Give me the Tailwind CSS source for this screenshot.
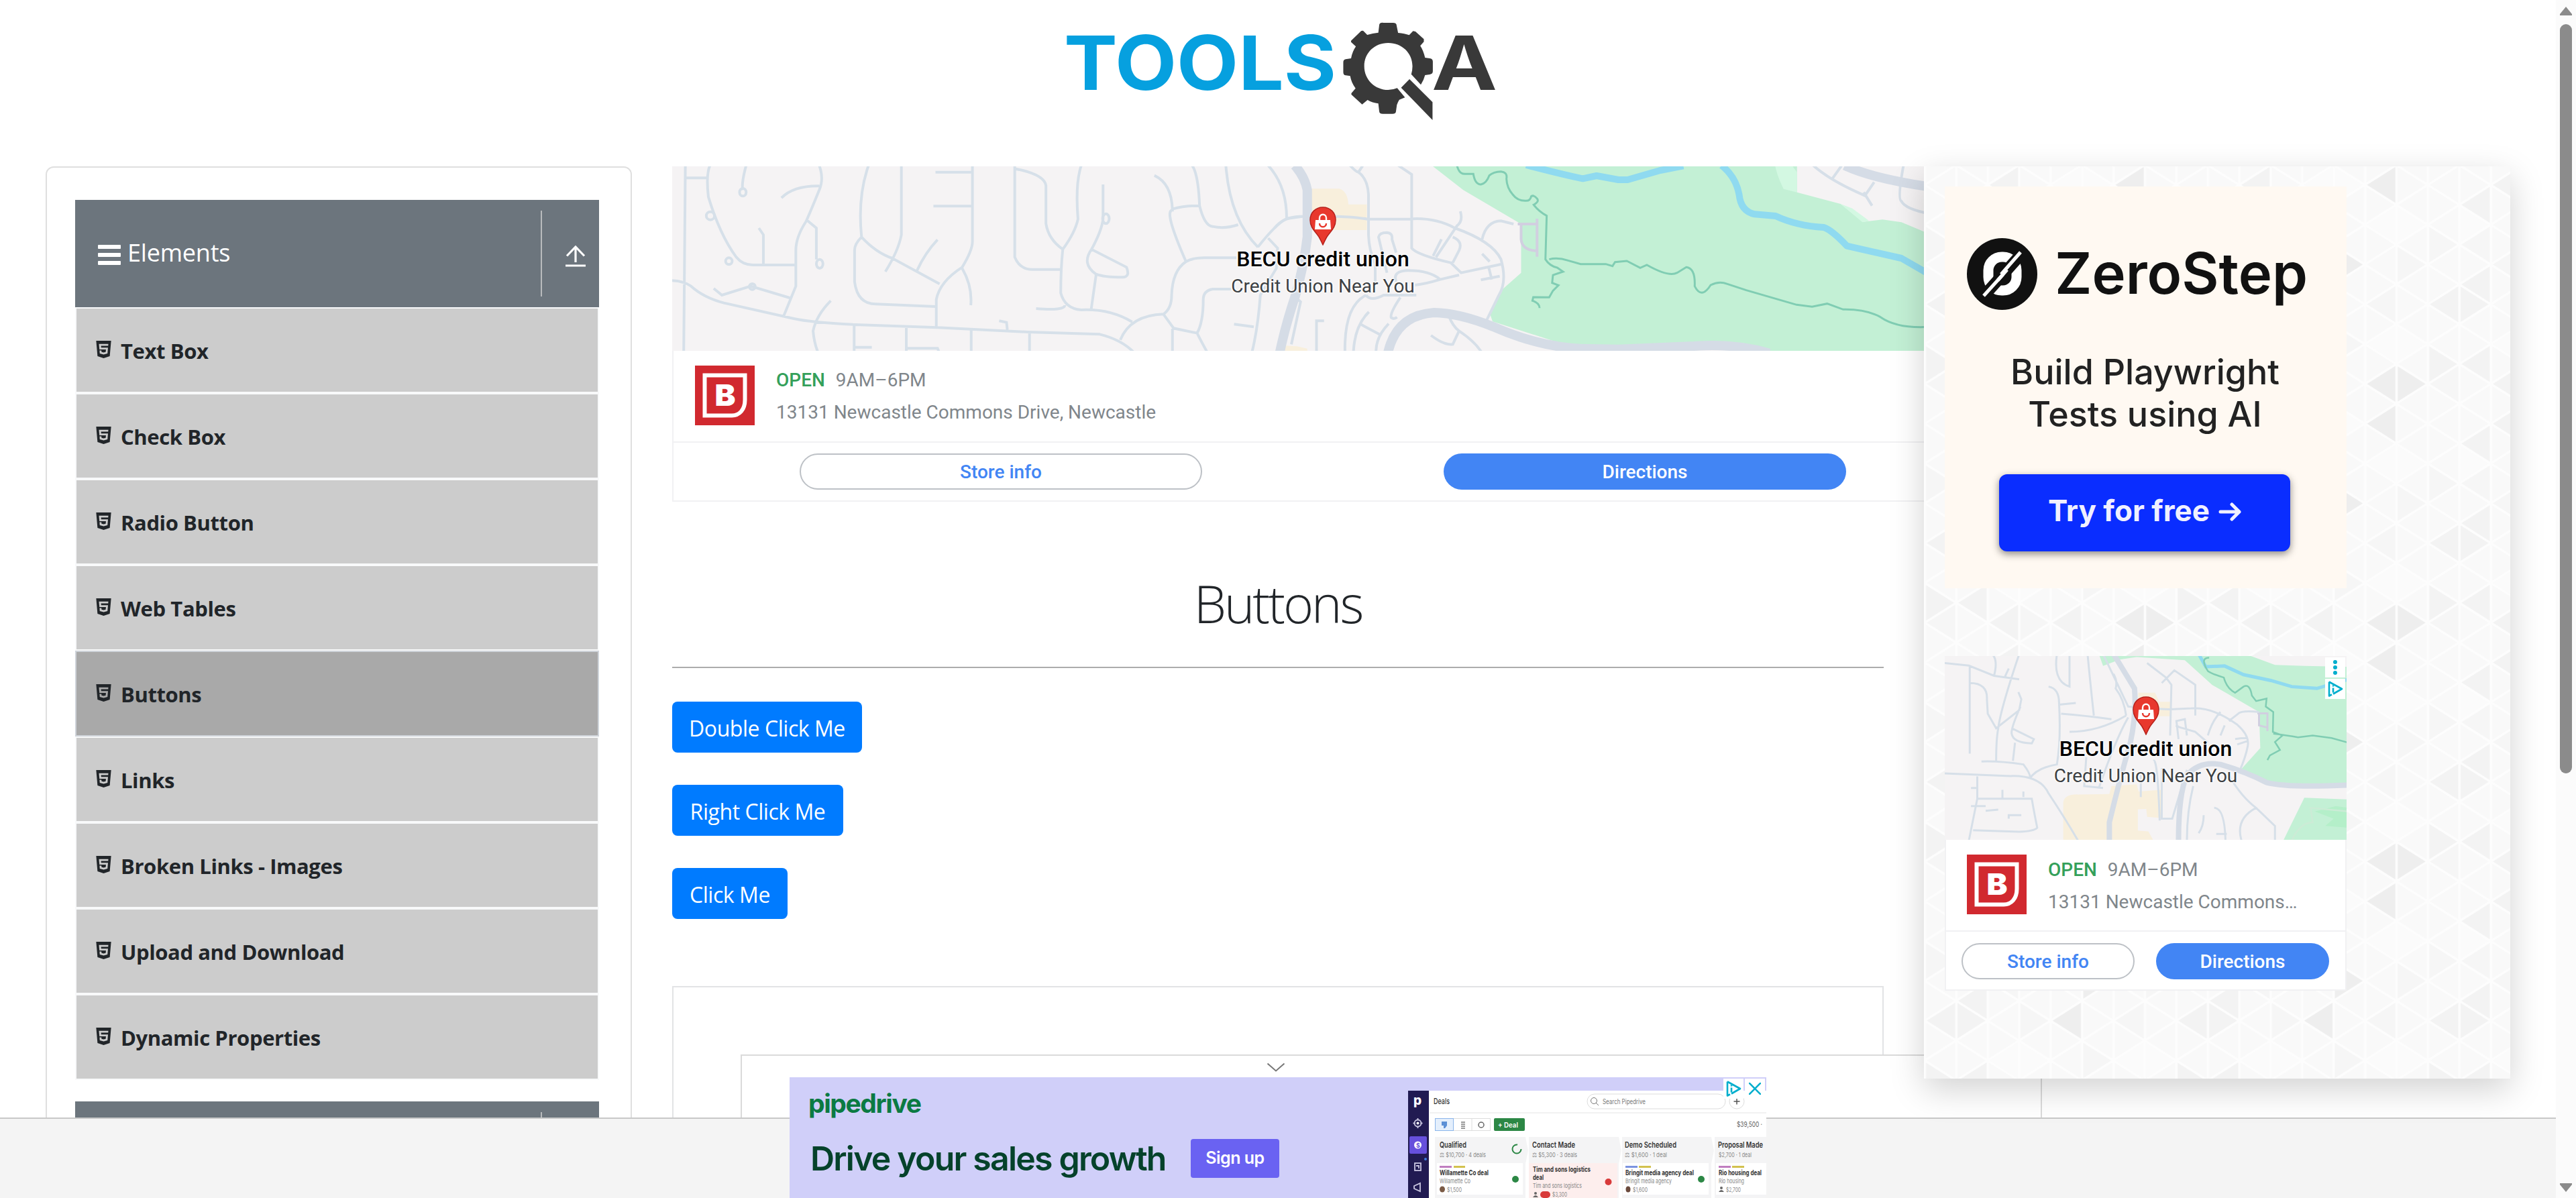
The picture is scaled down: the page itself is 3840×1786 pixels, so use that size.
<!DOCTYPE html>
<html lang="en">
<head>
<meta charset="utf-8">
<title>ToolsQA - Buttons</title>
<script src="https://cdn.jsdelivr.net/npm/@tailwindcss/browser@4"></script>
</head>
<body class="relative h-[1786px] w-[3840px] overflow-hidden bg-white font-['Open_Sans','Noto_Sans',sans-serif] text-[#212529]">

<!-- shared symbols -->
<svg class="hidden">
  <symbol id="html5" viewBox="0 32 384 448"><path d="M0 32l34.9 395.8L191.5 480l157.6-52.2L384 32H0zm308.2 127.9H124.4l4.1 49.4h175.6l-13.6 148.4-97.9 27v.3h-1.1l-98.7-27.3-6-75.8h47.7L138 320l53.5 14.500 53.7-14.500 6-62.2H84.3L71.5 112.2h241.1l-4.4 47.7z"/></symbol>
  <symbol id="pin" viewBox="0 0 40 58"><path d="M20 1C9 1 1 9 1 20c0 12 8 17 13 25 3 5 4 8 6 12 2-4 3-7 6-12 5-8 13-13 13-25C39 9 31 1 20 1z" fill="#e8382d" stroke="#b5211b" stroke-width="1.5"/><path d="M9 20h22l1 14H8z" fill="#fff"/><path d="M15 21v-4c0-7 10-7 10 0v4" fill="none" stroke="#fff" stroke-width="2.4"/><path d="M15 25c0 7 10 7 10 0" fill="none" stroke="#e8382d" stroke-width="2.4"/></symbol>
  <symbol id="becu" viewBox="0 0 89 89"><rect width="89" height="89" fill="#d1292f"/><path d="M14.500 14.500H74.500V51C74.500 66 66 74.500 55 74.500H14.500z" fill="none" stroke="#fff" stroke-width="6"/><text x="29.500" y="60" font-family="Inter, sans-serif" font-weight="900" font-size="44" fill="#fff" textLength="31" lengthAdjust="spacingAndGlyphs">B</text></symbol>
  <symbol id="adchoice" viewBox="0 0 24 26"><path d="M3 2.500v21l4-2.200M3 2.500L22 13 9 20.500" fill="none" stroke="#00aecd" stroke-width="2.600" stroke-linejoin="round"/><path d="M9 11.500v7M9 7.500v2" stroke="#00aecd" stroke-width="2.600"/></symbol>
</svg>

<header class="h-[248px] w-full">
  <svg class="ml-[1560px] h-[220px] w-[700px]" viewBox="0 0 700 220">
    <text x="26" y="134" font-family="Inter, sans-serif" font-weight="700" font-size="112" fill="#06a0df" textLength="406" lengthAdjust="spacingAndGlyphs">TOOLS</text>
    <text x="574" y="134" font-family="Inter, sans-serif" font-weight="700" font-size="112" fill="#393939" textLength="98" lengthAdjust="spacingAndGlyphs">A</text>
    <g transform="scale(.44643 .33333)">
      <path fill="#393939" fill-rule="evenodd" d="M1125 102h32q12 0 12 12l5 33q22 2 37 10l13-18 8 2 28 34v12l-12 18q10 20 16 53l16 3q10 2 10 14v44q0 12-10 14l-16 3q-4 22-14 43l-32-47q4-18 4-36c0-60-36-104-81-104s-80 44-80 104 36 106 80 106q16 0 30-8l26 42-19 10q-5 10-8 23l-3 28q0 12-12 12h-32q-12 0-12-12l-3-34q-20-3-36-16l-18 20-36-44v-6l14-22q-14-24-18-55l-15-3q-8-2-8-14v-44q0-12 8-14l18-4q4-30 16-53l-16-20v-6l34-44 6-1 14 19q18-7 37-10l3-33q0-12 11-12z"/>
      <path fill="#393939" d="M1212 354l77 103v80L1184 392z"/>
    </g>
  </svg>
</header>

<main class="flex gap-[60px] pl-[68px]">

  <!-- sidebar -->
  <aside class="h-[1600px] w-[874px] shrink-0 rounded-[12px] border-2 border-[#dfdfdf] px-[42px] pt-[48px]">
    <div class="flex h-[160px] w-[781px] items-center bg-[#6c757d] pl-[34px] text-white">
      <svg class="mt-[4px] h-[30px] w-[34px]" viewBox="0 0 34 30" fill="#fff"><rect width="34" height="6" rx="1"/><rect y="12" width="34" height="6" rx="1"/><rect y="24" width="34" height="6" rx="1"/></svg>
      <span class="mt-[-2px] ml-[10px] text-[36px] leading-[50px] tracking-[-0.2px] whitespace-nowrap">Elements</span>
      <div class="ml-auto h-[128px] w-[2px] bg-[#b9bbbd]"></div>
      <svg class="mt-[8px] mr-[20px] ml-[35px] h-[32px] w-[30px]" viewBox="0 0 30 32" fill="none" stroke="#fff" stroke-width="3.200"><path d="M15 25V3M2 15.500L15 2l13 13.500M0 30h30"/></svg>
    </div>
    <ul class="w-[781px] text-[31px] leading-[48px] font-bold tracking-[-0.4px]">
      <li class="flex h-[128px] items-center border-2 border-[#f8f9fa] bg-[#ccc] pt-[2px] pl-[29px]"><svg class="mb-[5px] mr-[14px] h-[26px] w-[23px] fill-[#212529]"><use href="#html5"/></svg>Text Box</li>
      <li class="flex h-[128px] items-center border-2 border-[#f8f9fa] bg-[#ccc] pt-[2px] pl-[29px]"><svg class="mb-[5px] mr-[14px] h-[26px] w-[23px] fill-[#212529]"><use href="#html5"/></svg>Check Box</li>
      <li class="flex h-[128px] items-center border-2 border-[#f8f9fa] bg-[#ccc] pt-[2px] pl-[29px]"><svg class="mb-[5px] mr-[14px] h-[26px] w-[23px] fill-[#212529]"><use href="#html5"/></svg>Radio Button</li>
      <li class="flex h-[128px] items-center border-2 border-[#f8f9fa] bg-[#ccc] pt-[2px] pl-[29px]"><svg class="mb-[5px] mr-[14px] h-[26px] w-[23px] fill-[#212529]"><use href="#html5"/></svg>Web Tables</li>
      <li class="flex h-[128px] items-center border-2 border-[#cfd4da] bg-[#a9a9a9] pt-[2px] pl-[29px]"><svg class="mb-[5px] mr-[14px] h-[26px] w-[23px] fill-[#212529]"><use href="#html5"/></svg>Buttons</li>
      <li class="flex h-[128px] items-center border-2 border-[#f8f9fa] bg-[#ccc] pt-[2px] pl-[29px]"><svg class="mb-[5px] mr-[14px] h-[26px] w-[23px] fill-[#212529]"><use href="#html5"/></svg>Links</li>
      <li class="flex h-[128px] items-center border-2 border-[#f8f9fa] bg-[#ccc] pt-[2px] pl-[29px]"><svg class="mb-[5px] mr-[14px] h-[26px] w-[23px] fill-[#212529]"><use href="#html5"/></svg>Broken Links - Images</li>
      <li class="flex h-[128px] items-center border-2 border-[#f8f9fa] bg-[#ccc] pt-[2px] pl-[29px]"><svg class="mb-[5px] mr-[14px] h-[26px] w-[23px] fill-[#212529]"><use href="#html5"/></svg>Upload and Download</li>
      <li class="flex h-[128px] items-center border-2 border-[#f8f9fa] bg-[#ccc] pt-[2px] pl-[29px]"><svg class="mb-[5px] mr-[14px] h-[26px] w-[23px] fill-[#212529]"><use href="#html5"/></svg>Dynamic Properties</li>
    </ul>
    <div class="mt-[32px] flex h-[160px] w-[781px] items-center bg-[#6c757d]"><div class="ml-[694px] h-[128px] w-[2px] bg-[#b9bbbd]"></div></div>
  </aside>

  <!-- page content -->
  <section class="w-[1806px] shrink-0">
    <div class="h-[500px] w-[1940px] border-x-2 border-b-2 border-[#f1f1f3] font-[Roboto,sans-serif]">
      <div class="relative -ml-[2px] h-[275px] w-[1940px]">
        <svg class="h-[275px] w-[1940px]" viewBox="0 0 1940 275">
          <rect width="1940" height="275" fill="#f5f3f4"/>
          <g transform="translate(898 -8) scale(.625 .33333)">
            <path fill="#f8efdc" d="M88 124h66q20 10 22 70h44v115H88zM24 826l30 3 24 10v20H15z"/>
            <path fill="#c3f0d5" d="M375 20H1246V140L1350 192 1403 272 1450 262 1495 274 1560 325V860H1190L1110 815 700 826 520 718 513 680 540 580 588 500V282L450 130z"/>
            <path fill="#d3f8e2" d="M1194 20h40l12 30v90l-32-15q-16-60-20-105zM1350 192l28 20 40 56-16 6z"/>
            <g fill="none" stroke="#8fdaf0" stroke-width="10" stroke-linejoin="round">
              <path vector-effect="non-scaling-stroke" d="M600 18Q690 62 735 79L768 66 820 84H842L920 42 975 22M1066 20Q1100 70 1108 150 1112 225 1145 238L1195 246Q1245 290 1310 297 1330 310 1365 380L1495 435 1560 505"/>
            </g>
            <g fill="none" stroke="#80cdb3" stroke-width="3">
              <path vector-effect="non-scaling-stroke" d="M435 20Q440 60 455 58H474Q478 105 492 105 505 100 512 65 522 48 540 47 556 50 553 80 554 120 568 150 580 180 600 178 610 178 612 158 618 150 626 168 632 182 618 196 630 225 649 245L646 440Q656 470 674 477L688 495 664 510 662 545 677 556 664 580 655 610 617 609 615 625Q632 635 632 658M655 440Q675 430 700 445L730 461H790L806 470 812 452 840 447 872 478 888 465Q940 520 960 500L982 475Q1004 480 1002 560 1018 620 1040 555 1060 535 1080 550L1125 578 1245 643 1282 652 1318 638 1356 664Q1410 662 1445 698 1485 750 1560 742"/>
            </g>
            <g fill="none" stroke="#d1cfe0" stroke-width="4"><path vector-effect="non-scaling-stroke" d="M580 282H626M626 258V428M588 282V350Q590 400 626 402"/></g>
            <g fill="none" stroke="#d6dfe8" stroke-width="4">
              <path vector-effect="non-scaling-stroke" d="M180 20Q195 50 200 50L210 22M200 50Q222 80 224 150V330Q225 400 240 460V540M295 20L327 60V390Q340 420 420 455L445 500 540 462M0 300Q20 250 60 248H150Q190 250 222 260H320Q380 250 430 300 520 360 540 440 555 540 535 600L505 715M495 350Q505 270 540 268L570 282M443 225Q450 270 435 290L385 430M398 350L378 425M425 340Q450 360 440 400L425 455M268 500L248 340Q250 320 268 320 282 322 280 350L290 410M290 540Q280 490 320 490 370 490 395 530 360 550 335 555M395 530L440 510M495 415L513 450M510 470L518 530M492 532L537 515M218 600Q165 650 168 860M218 600Q230 630 260 600H338M300 610Q275 680 278 700 285 710 292 698M225 675Q190 740 188 860M205 730L255 780M272 728Q240 790 242 860M415 690Q425 740 440 760L425 820Q405 825 373 780M440 760Q480 810 495 860M118 715H100V860M50 610L62 630 40 820M1285 20Q1320 80 1390 140L1408 155 1430 95M1352 22L1330 80M1405 140L1425 200M1500 20Q1485 170 1495 180 1505 215 1560 235"/>
            </g>
            <path vector-effect="non-scaling-stroke" fill="none" stroke="#d5dce6" stroke-width="14" d="M48 20Q72 70 78 130V340Q70 470 50 600 25 740 12 860M270 860Q290 690 380 678 440 680 520 740 640 840 750 840L820 842 1000 828Q1100 815 1180 860M1360 20Q1420 75 1560 115"/>
          </g>
          <g transform="translate(-2.400 -8) scale(.61224 .33333)" fill="none" stroke="#d6e0e9" stroke-width="4">
            <path vector-effect="non-scaling-stroke" d="M36 20L32 860M36 76H90M96 20Q86 60 92 160 120 330 160 430 175 465 200 465H305M184 20Q172 100 176 130M270 165Q300 110 362 112M362 20Q374 80 362 130 340 230 330 270 305 340 305 400V560L275 695M330 262L355 300V440M215 300L226 330V465M0 535Q30 535 50 560 80 610 130 635L300 705Q340 722 450 732L650 745 870 765 1045 775Q1100 800 1130 860M105 570L125 600 195 560 290 612M390 625Q355 690 347 760 350 820 360 860M447 732V860M450 833H490M574 740V860M574 838H650L655 860M732 756V860M874 768V860M647 745V620Q655 540 710 475 735 400 735 360V20M645 50H735M640 202H735M482 20Q455 160 465 340 500 410 540 435L655 550M465 340Q448 370 448 400V540Q455 640 500 640L645 651M562 20V330Q555 400 523 495M650 352Q620 410 600 490M710 480Q735 560 731 645M838 20V430Q850 485 880 485H950M840 35Q910 60 914 110V280Q920 350 955 395M1000 20Q985 100 992 260 985 320 955 395 950 480 950 590 960 660 1000 666 1070 660 1124 720M1053 105V260Q1050 310 1025 395L1110 475Q1120 520 1100 520 1055 520 1035 505 1000 460 1025 395M1036 510L1024 665M890 660Q960 670 960 645M800 715L818 722 820 755M1095 800Q1120 690 1200 685 1220 660 1220 600 1222 490 1255 450 1200 220 1222 220 1220 100 1178 65M1222 215Q1250 200 1288 200M1270 20Q1285 60 1288 200 1300 290 1320 293 1350 305 1382 285M1352 20Q1362 260 1430 385M1455 20Q1500 110 1500 255M1255 450Q1270 433 1300 433H1378M1430 385Q1475 280 1500 258L1538 248M1455 345L1478 390 1475 480 1436 600Q1430 750 1415 860M1365 573H1320Q1297 580 1297 620 1297 720 1282 770 1290 800 1308 860M1200 685L1225 748 1282 770M1222 750V860M1372 730L1420 742"/>
            <g><ellipse vector-effect="non-scaling-stroke" cx="176" cy="140" rx="8" ry="17"/><ellipse vector-effect="non-scaling-stroke" cx="363" cy="460" rx="8" ry="20"/><ellipse vector-effect="non-scaling-stroke" cx="142" cy="448" rx="8" ry="15"/><ellipse vector-effect="non-scaling-stroke" cx="97" cy="245" rx="10" ry="18"/><ellipse vector-effect="non-scaling-stroke" cx="199" cy="562" rx="7" ry="13"/><ellipse vector-effect="non-scaling-stroke" cx="1060" cy="258" rx="8" ry="22"/></g>
          </g>
        </svg>
        <div class="absolute inset-x-0 top-[60px] flex flex-col items-center text-[#3c4043] [text-shadow:0_0_3px_#fff,0_0_3px_#fff,0_0_3px_#fff,0_0_3px_#fff,0_0_3px_#fff]">
          <svg class="h-[58px] w-[40px]"><use href="#pin"/></svg>
          <div class="text-[32px] leading-[40px] font-medium whitespace-nowrap text-black">BECU credit union</div>
          <div class="text-[28px] leading-[42px] whitespace-nowrap">Credit Union Near You</div>
        </div>
      </div>
      <div class="flex h-[137px] border-b-2 border-[#f1f1f3] pt-[22px] pl-[32px]">
        <svg class="h-[89px] w-[89px]"><use href="#becu"/></svg>
        <div class="-mt-[2px] ml-[32px] text-[28px] leading-[48px] whitespace-nowrap text-[#80868b]">
          <div class="flex gap-[16px]"><span class="font-medium text-[#34a05a]">OPEN</span><span>9AM–6PM</span></div>
          <div>13131 Newcastle Commons Drive, Newcastle</div>
        </div>
      </div>
      <div class="flex gap-[360px] px-[188px] pt-[16px] text-[28px] font-medium">
        <div class="flex h-[54px] w-[600px] items-center justify-center rounded-full border-2 border-[#bdc1c6] pt-[2px] text-[#4285f4]">Store info</div>
        <div class="flex h-[54px] w-[600px] items-center justify-center rounded-full bg-[#4285f4] pt-[2px] text-white">Directions</div>
      </div>
    </div>

    <h1 class="mt-[96px] flex h-[112px] items-center justify-center text-[77px] leading-[112px] font-light tracking-[-3px]">Buttons</h1>
    <hr class="mt-[38px] border-0 border-t-2 border-[#acacac]">
    <div class="mt-[50px] flex flex-col items-start gap-[48px] text-[32px] leading-[48px] tracking-[-0.45px] text-white">
      <button class="h-[76px] w-[283px] rounded-[8px] bg-[#007bff] pt-[3px] whitespace-nowrap">Double Click Me</button>
      <button class="h-[76px] w-[255px] rounded-[8px] bg-[#007bff] pt-[3px] whitespace-nowrap">Right Click Me</button>
      <button class="h-[76px] w-[172px] rounded-[8px] bg-[#007bff] pt-[3px] whitespace-nowrap">Click Me</button>
    </div>
    <div class="mt-[100px] h-[400px] w-full border-2 border-[#e2e3e5]"></div>
  </section>

  <!-- right-hand adverts -->
  <aside class="relative z-20 h-[1360px] w-[874px] shrink-0 shadow-[0_16px_48px_rgba(0,0,0,0.18)]">
    <svg class="absolute inset-0 h-[1360px] w-[874px]">
      <defs>
        <pattern id="tri" patternUnits="userSpaceOnUse" x="1.400" y="-2" width="375" height="356">
          <g transform="scale(46.875 29.667)">
            <rect width="8" height="12" fill="#f9f9f9"/>
            <path fill="#eee" d="M6 11l1-1 1 1-1 1zM7 0v2L6 1zM5 4v2l1-1zM5 6v2L4 7z"/>
            <path fill="#f3f3f3" d="M0 7l1-1 1 1-1 1zM2 1v2L1 2zM3 0v2L2 1zM3 10v2l-1-1zM5 10v2l-1-1zM2 5v2L1 6zM0 9v2l1-1zM2 9v2l-1-1z"/>
            <path fill="#f6f6f6" d="M3 10v2l1-1zM0 11l1-1v2zM4 3l1-1v2zM2 5l1-1v2zM7 4v2l1-1zM0 3l1 1-1 1zM2 3v2L1 4zM6 7l1-1v2zM3 6v2l1-1zM5 8l1 1-1 1z"/>
            <path fill="#fbfbfb" d="M6 3l1-1 1 1-1 1zM4 1l1-1 1 1-1 1zM1 2l1 1-1 1zM2 9l1-1 1 1-1 1zM6 9l1-1 1 1-1 1z"/>
          </g>
          <path fill="none" stroke="#fdfdfd" stroke-width="3.500" d="M0 0V356M46.900 0V356M93.800 0V356M140.600 0V356M187.500 0V356M234.400 0V356M281.300 0V356M328.100 0V356M375 0V356
            M-47 0L562 385.700M-47 59.300L562 445M-47 118.700L562 504.400M-47 178L562 563.700M-47 237.300L562 623M-47 296.700L562 682.400M-47 356L562 741.700M-47-59.300L562 326.300M-47-118.700L562 267M-47-178L562 207.700M-47-237.300L562 148.300M-47-296.700L562 89
            M-47 0L562-385.700M-47 59.300L562-326.400M-47 118.700L562-267M-47 178L562-207.700M-47 237.300L562-148.400M-47 296.700L562-89M-47 356L562-29.700M-47 415.300L562 29.600M-47 474.700L562 89M-47 534L562 148.300M-47 593.300L562 207.600M-47 652.700L562 267"/>
        </pattern>
      </defs>
      <rect width="874" height="1360" fill="url(#tri)"/>
    </svg>
    <div class="relative flex flex-col gap-[101px] pt-[30px] pl-[31px]">
      <div class="flex h-[599px] w-[599px] flex-col items-center bg-[#fff9f2] font-[Inter,sans-serif] text-[#111]">
        <div class="flex w-full items-center gap-[26px] pt-[70px] pl-[33px]">
          <svg class="mt-[7px] h-[107px] w-[105px]" viewBox="0 0 105 107"><ellipse cx="52.500" cy="53.500" rx="52.500" ry="53.500" fill="#111"/><rect x="32" y="28" width="42" height="50" rx="20" fill="none" stroke="#fff" stroke-width="15"/><path d="M20 92L88 16" stroke="#111" stroke-width="17"/><path d="M25 86L54 54M51 54L80 21" stroke="#fff" stroke-width="5"/><path d="M46 63l14-16" stroke="#fff" stroke-width="5"/></svg>
          <span class="mt-[4px] text-[85px] leading-[107px] font-semibold whitespace-nowrap">ZeroStep</span>
        </div>
        <div class="mt-[61px] -ml-[2px] text-center text-[52px] leading-[63px] font-medium text-[#222]">Build Playwright<br>Tests using AI</div>
        <div class="mt-[58px] -ml-[3px] flex h-[115px] w-[434px] items-center justify-center gap-[13px] rounded-[12px] bg-[#0a2dff] text-[44px] leading-[60px] font-bold text-[#f0f0ff] shadow-[0_4px_12px_rgba(0,0,0,0.45)]">
          <span class="-mt-[8px] whitespace-nowrap">Try for free</span>
          <svg class="-mt-[4px] h-[28px] w-[34px]" viewBox="0 0 34 28" fill="none" stroke="#f0f0ff" stroke-width="5" stroke-linecap="round" stroke-linejoin="round"><path d="M3 14h28M20 3l11 11-11 11"/></svg>
        </div>
      </div>

      <div class="relative h-[499px] w-[599px] border-x-2 border-b-2 border-[#f1f1f3] bg-white font-[Roboto,sans-serif]">
        <div class="relative -ml-[2px] h-[274px] w-[599px]">
          <svg class="h-[274px] w-[599px]" viewBox="0 0 599 274">
            <rect width="599" height="274" fill="#f5f3f4"/>
            <g transform="translate(-39 -38) scale(.625 .5395)">
              <path fill="#f8efdc" d="M524 172h40l10 25h26v40H524zM345 580V475Q348 452 380 453L455 452 460 430 520 425 525 445 578 440V518L545 515 543 493 523 494V553L548 555 560 580H378z"/>
              <path fill="#c3f0d5" d="M430 65L440 98 480 80 520 73 635 82 700 150 812 225 815 325 768 385 790 400 860 428 1025 425V100L920 98 850 95 780 65zM920 462L1025 467V580H870z"/>
              <path fill="#b4efc9" d="M945 500l50-15 30 5v55l-55-5 20-20z"/>
              <g fill="none">
                <path vector-effect="non-scaling-stroke" stroke="#8fdaf0" stroke-width="5" d="M668 65L685 100 730 98 775 122 840 138 890 155 950 160 1025 135"/>
                <path vector-effect="non-scaling-stroke" stroke="#80cdb3" stroke-width="2.500" d="M693 75Q670 75 690 112 700 120 728 130 735 160 755 172L775 155Q790 145 795 180L805 195 830 188 828 210 846 225 845 280 868 290 850 308 862 330 838 345 832 358M846 285Q880 290 905 295L940 290 985 297 1025 310"/>
                <path vector-effect="non-scaling-stroke" stroke="#d1cfe0" stroke-width="3" d="M808 229H832V278M812 229V262L832 268"/>
                <path vector-effect="non-scaling-stroke" stroke="#d6dfe8" stroke-width="3" d="M62 90L120 97 180 125 240 135M180 125Q190 80 175 65M215 105L205 130M122 100V340M122 145Q165 145 163 190L165 230Q180 260 185 270L240 220 245 190 238 170M240 65Q195 220 190 270 185 300 185 360M243 210Q220 270 222 285 225 310 270 312L275 300 222 270M230 310L225 360M150 362Q190 360 250 370 270 400 265 410M330 65Q320 140 360 155V65M310 155Q335 160 335 200 340 300 330 370 280 380 265 410M403 65Q410 150 418 235M335 205L375 200M340 230Q395 235 460 245M465 120Q475 140 470 160 490 190 495 235M495 235Q430 280 360 280M62 395L220 402Q290 400 310 450 350 520 380 580M140 403L140 465 120 580M140 465H270Q275 500 283 545 275 555 240 556L130 552M125 435H140M200 440V463M250 445V460M190 495L160 498M125 485H160M245 510H215V520M440 65L500 210 540 215 600 218 650 215Q700 210 760 260 790 290 785 320 780 350 765 390M545 90L590 130 603 150 600 290M580 145L610 110 660 150V235M620 265Q600 260 660 280L690 310M690 290Q700 250 720 225M720 290L730 262M740 250L762 230Q770 220 812 225M620 300L615 250 635 245 640 290M755 300L785 295M760 315L785 305M500 240Q470 300 430 435M400 350L395 430 440 435M580 380V520L605 520 640 385M560 360Q570 350 575 525M655 430Q640 500 640 580M740 400Q770 460 805 490L850 540V580M805 490Q755 520 770 580M705 490Q730 490 732 580M530 390V460M680 510Q680 540 668 560M710 562H735"/>
                <path vector-effect="non-scaling-stroke" stroke="#d5dce6" stroke-width="8" d="M465 65L515 160Q520 230 505 310 480 410 455 530V580M620 580Q620 450 640 400 670 360 720 370 780 390 830 420 880 435 1025 427"/>
                <path vector-effect="non-scaling-stroke" stroke="#ccebd6" stroke-width="2.500" d="M890 580Q910 530 940 530L935 490 1025 500"/>
              </g>
            </g>
          </svg>
          <div class="absolute inset-x-0 top-[60px] flex flex-col items-center text-[#3c4043] [text-shadow:0_0_3px_#fff,0_0_3px_#fff,0_0_3px_#fff,0_0_3px_#fff,0_0_3px_#fff]">
            <svg class="h-[58px] w-[40px]"><use href="#pin"/></svg>
            <div class="text-[32px] leading-[40px] font-medium whitespace-nowrap text-black">BECU credit union</div>
            <div class="text-[28px] leading-[42px] whitespace-nowrap">Credit Union Near You</div>
          </div>
        </div>
        <div class="flex h-[137px] border-b-2 border-[#f1f1f3] pt-[22px] pl-[31px]">
          <svg class="h-[89px] w-[89px]"><use href="#becu"/></svg>
          <div class="-mt-[1px] ml-[32px] text-[28px] leading-[48px] whitespace-nowrap text-[#80868b]">
            <div class="flex gap-[16px]"><span class="font-medium text-[#34a05a]">OPEN</span><span>9AM–6PM</span></div>
            <div>13131 Newcastle Commons…</div>
          </div>
        </div>
        <div class="flex gap-[32px] pt-[17px] pl-[23px] text-[28px] font-medium">
          <div class="flex h-[54px] w-[258px] items-center justify-center rounded-full border-2 border-[#bdc1c6] pt-[2px] text-[#4285f4]">Store info</div>
          <div class="flex h-[54px] w-[258px] items-center justify-center rounded-full bg-[#4285f4] pt-[2px] text-white">Directions</div>
        </div>
        <div class="absolute top-[2px] right-0 flex flex-col gap-[2px]">
          <div class="flex h-[30px] w-[30px] flex-col items-center justify-center gap-[2px] bg-white"><i class="h-[6px] w-[6px] rounded-full bg-[#00aecd]"></i><i class="h-[6px] w-[6px] rounded-full bg-[#00aecd]"></i><i class="h-[6px] w-[6px] rounded-full bg-[#00aecd]"></i></div>
          <div class="flex h-[30px] w-[30px] items-center justify-center bg-white"><svg class="h-[26px] w-[24px]"><use href="#adchoice"/></svg></div>
        </div>
      </div>
    </div>
  </aside>
</main>

<!-- footer bar and anchored advert -->
<div class="absolute top-[1572px] left-[1104px] z-10 h-[100px] w-[1940px] border-2 border-[#dadada] bg-white"></div>
<footer class="absolute inset-x-0 top-[1666px] z-10 h-[120px] border-t-2 border-[#c8c8c8] bg-[#f4f4f4]"></footer>
<svg class="absolute top-[1584px] left-[1888px] z-10 h-[14px] w-[28px]" viewBox="0 0 28 14" fill="none" stroke="#777" stroke-width="2"><path d="M1.500 1.500L14 12.500 26.500 1.500"/></svg>
<div class="absolute top-[1606px] left-[1177px] z-10 flex h-[180px] w-[1456px] bg-[#d0cff9] font-[Inter,sans-serif]">
  <div class="w-[922px] pl-[28px]">
    <div class="mt-[15px] text-[39px] leading-[48px] font-bold tracking-[-1.4px] text-[#0b7a43]">pipedrive</div>
    <div class="mt-[28px] flex items-center pl-[3px]">
      <span class="w-[532px] text-[50px] leading-[60px] font-semibold tracking-[-1.8px] whitespace-nowrap text-[#05422b]">Drive your sales growth</span>
      <div class="ml-[35px] flex h-[58px] w-[132px] items-center justify-center rounded-[4px] bg-[#6a62f2] text-[25px] font-semibold tracking-[-0.5px] whitespace-nowrap text-white">Sign up</div>
    </div>
  </div>
  <svg class="mt-[20px] h-[160px] w-[534px]" viewBox="2099 1626 534 160" font-family="Inter, sans-serif" fill="#444">
    <rect x="2099" y="1626" width="534" height="160" fill="#fff"/>
    <rect x="2099" y="1626" width="31" height="160" fill="#211b52"/>
    <rect x="2101" y="1694" width="26" height="26" rx="2" fill="#6650dc"/>
    <text x="2107" y="1647" font-size="19" font-weight="800" fill="#fff">p</text>
    <g fill="none" stroke="#c9c6e0" stroke-width="1.800"><circle cx="2113.500" cy="1674.500" r="5"/><path d="M2113.500 1667v3m0 9v3m-7-7.500h3m8 0h3"/><rect x="2109" y="1734" width="9" height="11"/><path d="M2111 1738h4v4M2108 1771v-3l9-4v12l-9-4z"/></g>
    <circle cx="2113.500" cy="1674.500" r="2" fill="#fff"/><circle cx="2113.500" cy="1707" r="5.500" fill="#fff"/><text x="2111" y="1710.500" font-size="9" font-weight="700" fill="#6650dc">$</text><circle cx="2125" cy="1728" r="2" fill="#3f7be0"/>
    <text x="2137" y="1646" font-size="12" font-weight="500" fill="#333" textLength="24" lengthAdjust="spacingAndGlyphs">Deals</text>
    <path d="M2131 1659H2633" stroke="#e5e5e5" stroke-width="1"/>
    <rect x="2366" y="1631" width="206" height="22" rx="11" fill="none" stroke="#ddd"/><circle cx="2376" cy="1641" r="4.500" fill="none" stroke="#777"/><path d="M2379 1644l4 4" stroke="#777"/>
    <text x="2389" y="1646" font-size="10" fill="#777" textLength="64" lengthAdjust="spacingAndGlyphs">Search Pipedrive</text>
    <circle cx="2589" cy="1642" r="11" fill="none" stroke="#ddd"/><path d="M2584.500 1642h9m-4.500-4.500v9" stroke="#555" stroke-width="1.500"/>
    <rect x="2139.500" y="1667.500" width="82" height="18" fill="#fff" stroke="#ddd"/><rect x="2139.500" y="1667.500" width="27" height="18" fill="#e4effc" stroke="#8bb5ea"/><path d="M2194 1668v18" stroke="#ddd"/>
    <path d="M2149 1672h8v6l-3 4h-2v-4h-3z" fill="#5b90d6"/><path d="M2178 1673h6m-6 3h6m-6 3h6m-6 3h6" stroke="#777" stroke-width="1.500"/><circle cx="2208" cy="1677" r="4" fill="none" stroke="#666" stroke-width="1.500"/>
    <rect x="2227" y="1667" width="46" height="19" rx="2" fill="#2c8745"/><text x="2233" y="1681" font-size="11" font-weight="600" fill="#fff" textLength="30" lengthAdjust="spacingAndGlyphs">+ Deal</text>
    <text x="2589" y="1680" font-size="11" fill="#666" textLength="38" lengthAdjust="spacingAndGlyphs">$39,500 ·</text>
    <g fill="#f4f4f5"><path d="M2139 1695h135l4 20-4 20v51h-135zM2279 1695h134l4 20-4 20v51h-134zM2418 1695h133l4 20-4 20v51h-133zM2556 1695h77v91h-77z"/></g>
    <g font-size="12" font-weight="600" fill="#333"><text x="2146" y="1711" textLength="40" lengthAdjust="spacingAndGlyphs">Qualified</text><text x="2284" y="1711" textLength="64" lengthAdjust="spacingAndGlyphs">Contact Made</text><text x="2422" y="1711" textLength="77" lengthAdjust="spacingAndGlyphs">Demo Scheduled</text><text x="2561" y="1711" textLength="67" lengthAdjust="spacingAndGlyphs">Proposal Made</text></g>
    <g font-size="9.500" fill="#888"><text x="2146" y="1725" textLength="69" lengthAdjust="spacingAndGlyphs">⚖ $10,700 · 4 deals</text><text x="2284" y="1725" textLength="67" lengthAdjust="spacingAndGlyphs">⚖ $5,300 · 3 deals</text><text x="2422" y="1725" textLength="63" lengthAdjust="spacingAndGlyphs">⚖ $1,600 · 1 deal</text><text x="2562" y="1725" textLength="49" lengthAdjust="spacingAndGlyphs">$2,700 · 1 deal</text></g>
    <circle cx="2261" cy="1713" r="6.500" fill="none" stroke="#2c8745" stroke-width="2" stroke-dasharray="31 10"/>
    <g fill="#fff"><rect x="2142" y="1734" width="128" height="47"/><rect x="2419" y="1734" width="128" height="47"/><rect x="2558" y="1734" width="75" height="47"/></g><rect x="2279" y="1734" width="132" height="52" fill="#fdeeed"/>
    <path d="M2146 1739.500h18M2562 1739.500h18" stroke="#c07ec0" stroke-width="3"/><path d="M2167 1739.500h17M2443 1739.500h18M2582 1739.500h18" stroke="#d3c24e" stroke-width="3"/><path d="M2423 1739.500h18" stroke="#7c93e0" stroke-width="3"/>
    <g font-size="10.500" font-weight="700" fill="#333"><text x="2146" y="1752" textLength="73" lengthAdjust="spacingAndGlyphs">Willamette Co deal</text><text x="2285" y="1747" textLength="86" lengthAdjust="spacingAndGlyphs">Tim and sons logistics</text><text x="2285" y="1759" textLength="16" lengthAdjust="spacingAndGlyphs">deal</text><text x="2423" y="1752" textLength="102" lengthAdjust="spacingAndGlyphs">Bringit media agency deal</text><text x="2562" y="1752" textLength="64" lengthAdjust="spacingAndGlyphs">Rio housing deal</text></g>
    <g font-size="9.500" fill="#888"><text x="2146" y="1764" textLength="46" lengthAdjust="spacingAndGlyphs">Willamette Co</text><text x="2285" y="1771" textLength="73" lengthAdjust="spacingAndGlyphs">Tim and sons logistics</text><text x="2423" y="1764" textLength="69" lengthAdjust="spacingAndGlyphs">Bringit media agency</text><text x="2562" y="1764" textLength="38" lengthAdjust="spacingAndGlyphs">Rio housing</text><text x="2157" y="1777" textLength="22" lengthAdjust="spacingAndGlyphs">$1,500</text><text x="2314" y="1784" textLength="22" lengthAdjust="spacingAndGlyphs">$3,300</text><text x="2434" y="1777" textLength="22" lengthAdjust="spacingAndGlyphs">$1,600</text><text x="2573" y="1777" textLength="22" lengthAdjust="spacingAndGlyphs">$2,700</text></g>
    <g fill="#2c8745"><circle cx="2259" cy="1758" r="5"/><circle cx="2536" cy="1758" r="5"/></g><circle cx="2397.500" cy="1762" r="5" fill="#d83a3a"/><rect x="2296" y="1776" width="15" height="10" rx="5" fill="#d83a3a"/>
    <ellipse cx="2150" cy="1773" rx="4" ry="4.500" fill="#7a5a45"/><ellipse cx="2427" cy="1773" rx="3.500" ry="4.500" fill="#6b4a3d"/><g fill="#666"><circle cx="2289" cy="1779" r="2"/><path d="M2285 1785q4-6 8 0z"/><circle cx="2566" cy="1771" r="2"/><path d="M2562 1777q4-6 8 0z"/></g>
  </svg>
  <div class="absolute top-[2px] right-[2px] flex gap-[2px]">
    <div class="flex h-[30px] w-[30px] items-center justify-center bg-white"><svg class="h-[26px] w-[24px]"><use href="#adchoice"/></svg></div>
    <div class="flex h-[30px] w-[30px] items-center justify-center bg-white"><svg class="h-[18px] w-[18px]" viewBox="0 0 18 18" stroke="#00aecd" stroke-width="2.600"><path d="M0 0L18 18M18 0L0 18"/></svg></div>
  </div>
</div>

<!-- scrollbar -->
<div class="absolute inset-y-0 right-0 z-30 flex w-[30px] flex-col items-center bg-[#fbfbfb]">
  <svg class="mt-[10px] h-[14px] w-[18px]" viewBox="0 0 18 14" fill="#8b8b8b"><path d="M9 0l9 11v2H0v-2z"/></svg>
  <div class="mt-[12px] h-[1117px] w-[18px] rounded-full bg-[#8b8b8b]"></div>
  <svg class="mt-auto mb-[9px] h-[14px] w-[18px]" viewBox="0 0 18 14" fill="#8b8b8b"><path d="M9 14L0 3V1h18v2z"/></svg>
</div>
</body>
</html>
